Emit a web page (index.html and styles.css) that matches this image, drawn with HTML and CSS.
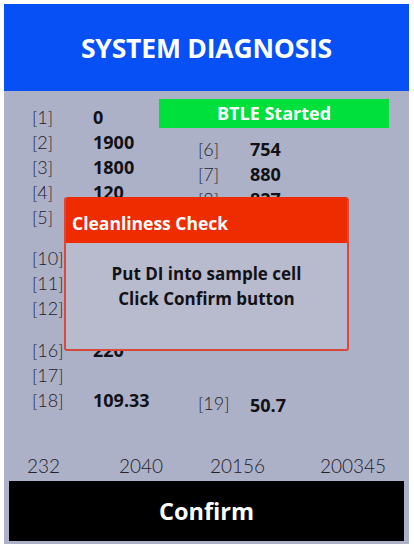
FILE: index.html
```html
<!DOCTYPE html>
<html>
<head>
<meta charset="utf-8">
<link rel="stylesheet" href="styles.css">
</head>
<body>
<div class="screen">
  <header class="header">SYSTEM DIAGNOSIS</header>
  <main class="content">
    <div class="block top">
      <div class="col left">
        <div class="row"><span class="lbl">[1]</span><span class="val">0</span></div>
        <div class="row"><span class="lbl">[2]</span><span class="val">1900</span></div>
        <div class="row"><span class="lbl">[3]</span><span class="val">1800</span></div>
        <div class="row"><span class="lbl">[4]</span><span class="val">120</span></div>
        <div class="row"><span class="lbl">[5]</span><span class="val"></span></div>
      </div>
      <div class="col right">
        <div class="status">BTLE Started</div>
        <div class="row"><span class="lbl rl">[6]</span><span class="val">754</span></div>
        <div class="row"><span class="lbl rl">[7]</span><span class="val">880</span></div>
        <div class="row"><span class="lbl rl">[8]</span><span class="val">827</span></div>
      </div>
    </div>
    <div class="block mid">
      <div class="col left">
        <div class="row"><span class="lbl">[10]</span><span class="val"></span></div>
        <div class="row"><span class="lbl">[11]</span><span class="val"></span></div>
        <div class="row"><span class="lbl">[12]</span><span class="val"></span></div>
      </div>
    </div>
    <div class="block low">
      <div class="col left">
        <div class="row"><span class="lbl">[16]</span><span class="val">220</span></div>
        <div class="row"><span class="lbl">[17]</span><span class="val"></span></div>
        <div class="row"><span class="lbl">[18]</span><span class="val">109.33</span></div>
      </div>
      <div class="col right end">
        <div class="row r19"><span class="lbl rl">[19]</span><span class="val v19">50.7</span></div>
      </div>
    </div>

    <div class="counts">
      <span>232</span><span>2040</span><span>20156</span><span>200345</span>
    </div>
    <div class="confirm">Confirm</div>

    <div class="dialog">
      <div class="dlg-title">Cleanliness Check</div>
      <div class="dlg-body">Put DI into sample cell<br>Click Confirm button</div>
    </div>
  </main>
</div>
</body>
</html>
```

FILE: styles.css
```css
html, body {
  margin: 0;
  padding: 0;
  background: #ffffff;
}
body {
  padding: 4px 5px 5px 4px;
  font-family: "Open Sans", "DejaVu Sans", sans-serif;
}
.screen {
  width: 405px;
  height: 540px;
  background: #adb1c8;
  display: flex;
  flex-direction: column;
}
.header {
  height: 87px;
  background: #0650f6;
  color: #fff;
  font-weight: 700;
  font-size: 26.5px;
  display: flex;
  align-items: center;
  justify-content: center;
  letter-spacing: -0.2px;
  flex: none;
}
.content {
  flex: 1;
  position: relative;
  display: flex;
  flex-direction: column;
  padding-top: 8px;
}
.block {
  display: flex;
}
.col {
  display: flex;
  flex-direction: column;
}
.left {
  width: 155px;
  padding-left: 28px;
  box-sizing: border-box;
  flex: none;
}
.top .left {
  padding-top: 5.5px;
}
.mid {
  margin-top: 16px;
}
.low {
  margin-top: 17px;
}
.right {
  flex: 1;
}
.right.end {
  justify-content: flex-end;
}
.row {
  height: 25px;
  display: flex;
  align-items: center;
}
.lbl {
  font-family: "Lato", "DejaVu Sans", sans-serif;
  font-weight: 300;
  font-size: 18px;
  color: #22222a;
  width: 61px;
  flex: none;
}
.rl {
  width: 52px;
  margin-left: 39px;
}
.val {
  font-weight: 700;
  font-size: 18px;
  color: #111116;
}
.status {
  width: 230px;
  height: 29px;
  background: #00e03c;
  color: #fff;
  font-weight: 700;
  font-size: 18px;
  display: flex;
  align-items: center;
  justify-content: center;
  margin-bottom: 8px;
  padding-bottom: 2px;
  box-sizing: border-box;
}
.r19 {
  transform: translateY(3px);
}
.v19 {
  transform: translateY(2px);
}
.counts {
  margin-top: auto;
  display: grid;
  grid-template-columns: 92px 91px 110px auto;
  padding-left: 23px;
  height: 22px;
  align-items: center;
  font-family: "Lato", "DejaVu Sans", sans-serif;
  font-weight: 300;
  font-size: 19px;
  color: #22222a;
}
.confirm {
  margin: 5px 5px 3px 5px;
  height: 60px;
  background: #000;
  color: #fff;
  font-weight: 700;
  font-size: 23.5px;
  display: flex;
  align-items: center;
  justify-content: center;
}
.dialog {
  position: absolute;
  left: 60px;
  top: 106px;
  width: 285px;
  height: 154px;
  border-radius: 3px;
  overflow: hidden;
  display: flex;
  flex-direction: column;
  background: #b8bacd;
  border: 2px solid #d8493a;
  border-top: none;
  box-sizing: border-box;
}
.dlg-title {
  height: 46px;
  background: #ef2b00;
  color: #fff;
  font-weight: 700;
  font-size: 17.5px;
  display: flex;
  align-items: center;
  padding: 6px 0 0 8px;
  box-sizing: border-box;
  margin: 0 -2px;
}
.dlg-body {
  text-align: center;
  font-weight: 700;
  font-size: 17px;
  line-height: 25px;
  color: #111116;
  padding-top: 18px;
}
```
